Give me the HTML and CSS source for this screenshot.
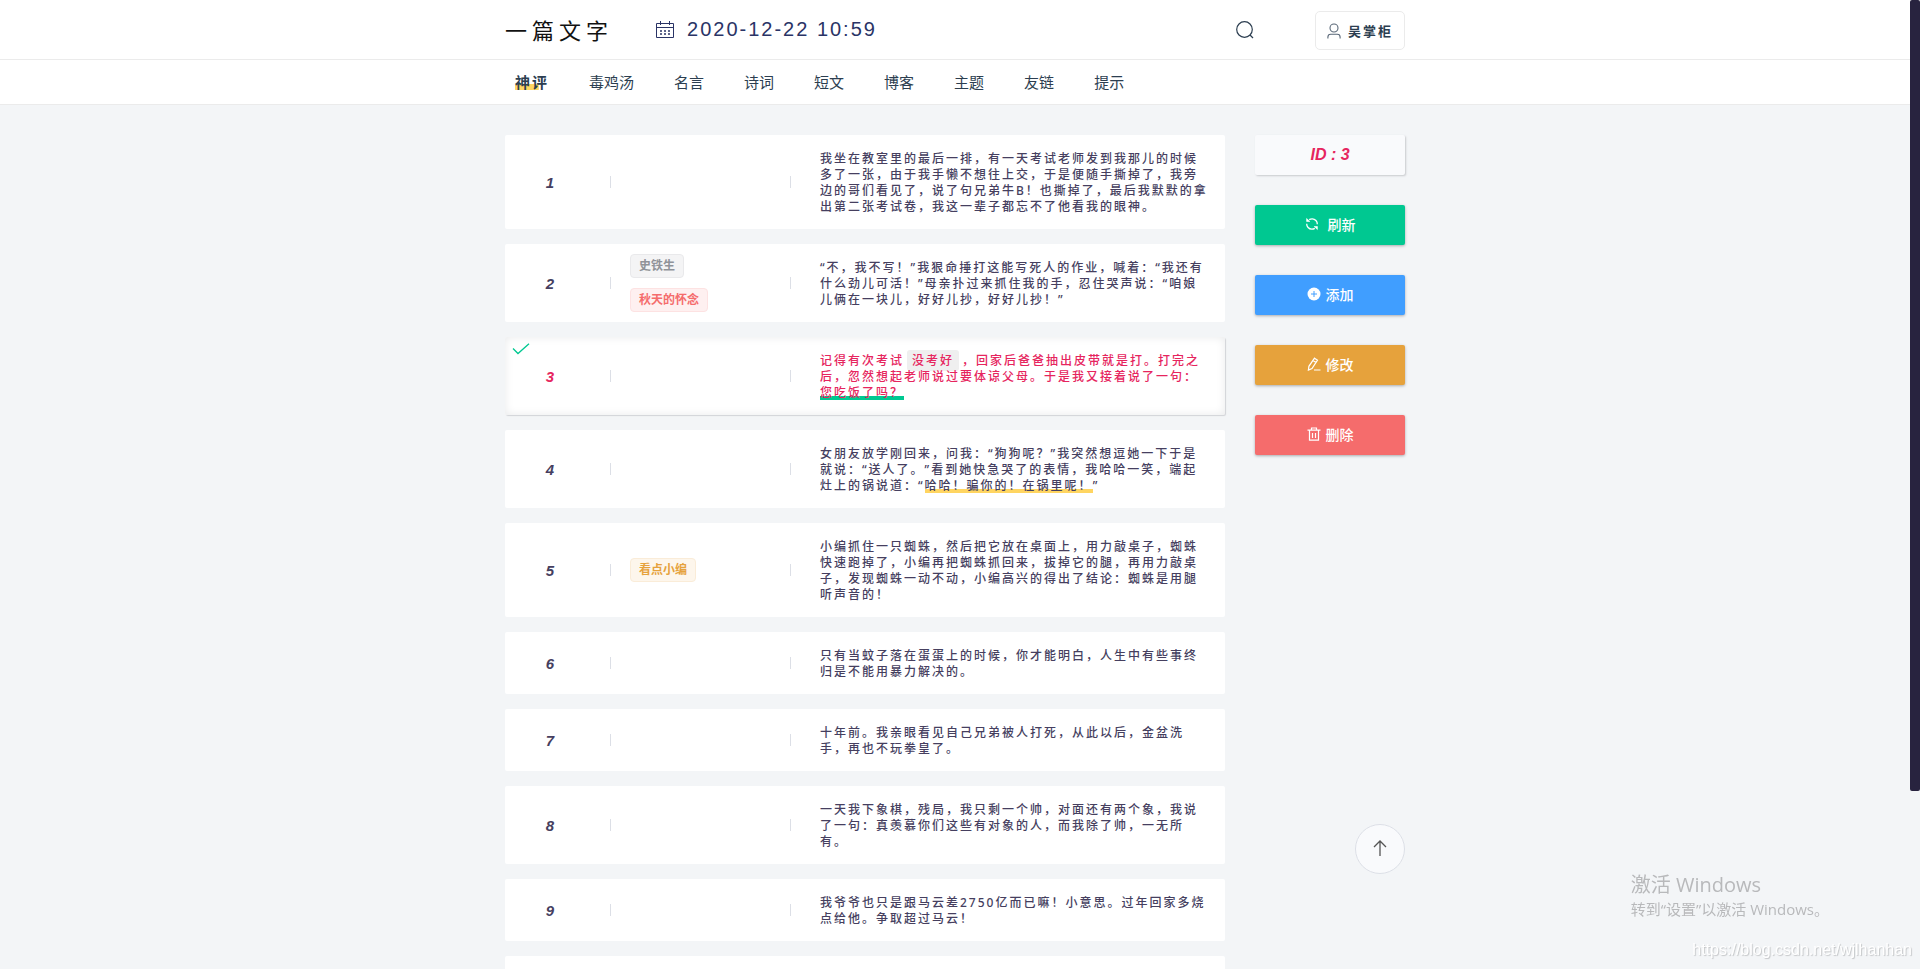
FILE: index.html
```html
<!DOCTYPE html>
<html lang="zh-CN">
<head>
<meta charset="utf-8">
<title>一篇文字</title>
<link rel="stylesheet" href="styles.css">
</head>
<body>
<header class="topbar">
  <div class="wrap topbar-row">
    <a class="logo" href="#">一篇文字</a>
    <div class="clock">
      <svg class="icon-cal" viewBox="0 0 18 18" fill="none" stroke="currentColor"><path d="M.5 2.500h17v14H.5zM.5 6.500h17M4.500 0v4M13.500 0v4"/><path stroke-dasharray="2 2" stroke-width="1.500" d="M4 10h10M4 13h10"/></svg>
      <time>2020-12-22 10:59</time>
    </div>
    <button class="search" type="button" aria-label="搜索">
      <svg viewBox="0 0 18 18" fill="none" stroke="currentColor" stroke-width="1.200"><circle cx="8.500" cy="8.500" r="7.800"/><path d="M14 14l3 3"/></svg>
    </button>
    <button class="user" type="button">
      <svg viewBox="0 0 14 16" fill="none" stroke="currentColor" stroke-width="1.100"><circle cx="7" cy="5" r="4"/><path d="M.9 15.500v-1.500q0-2.800 2.800-2.800h6.600q2.800 0 2.800 2.800v1.500"/></svg>
      <span>吴掌柜</span>
    </button>
  </div>
</header>
<nav class="menu">
  <div class="wrap menu-row">
    <a class="active" href="#">神评</a>
    <a href="#">毒鸡汤</a>
    <a href="#">名言</a>
    <a href="#">诗词</a>
    <a href="#">短文</a>
    <a href="#">博客</a>
    <a href="#">主题</a>
    <a href="#">友链</a>
    <a href="#">提示</a>
  </div>
</nav>
<main class="page">
  <div class="wrap content">
  <section class="list">
    <article class="card"><b class="num">1</b><i class="bar"></i><div class="tags"></div><i class="bar"></i><p>我坐在教室里的最后一排，有一天考试老师发到我那儿的时候多了一张，由于我手懒不想往上交，于是便随手撕掉了，我旁边的哥们看见了，说了句兄弟牛B！也撕掉了，最后我默默的拿出第二张考试卷，我这一辈子都忘不了他看我的眼神。</p></article>
    <article class="card"><b class="num">2</b><i class="bar"></i><div class="tags"><span class="tag gray">史铁生</span><span class="tag red">秋天的怀念</span></div><i class="bar"></i><p>“不，我不写！”我狠命捶打这能写死人的作业，喊着：“我还有什么劲儿可活！”母亲扑过来抓住我的手，忍住哭声说：“咱娘儿俩在一块儿，好好儿抄，好好儿抄！”</p></article>
    <article class="card selected"><svg class="check" viewBox="0 0 18 12" fill="none" stroke="currentColor" stroke-width="1.300"><path d="M1 5.500l5 5L17 .7"/></svg><b class="num">3</b><i class="bar"></i><div class="tags"></div><i class="bar"></i><p>记得有次考试<span class="chip">没考好</span>，回家后爸爸抽出皮带就是打。打完之后，忽然想起老师说过要体谅父母。于是我又接着说了一句：<span class="mark green">您吃饭了吗？</span></p></article>
    <article class="card"><b class="num">4</b><i class="bar"></i><div class="tags"></div><i class="bar"></i><p>女朋友放学刚回来，问我：“狗狗呢？”我突然想逗她一下于是就说：“送人了。”看到她快急哭了的表情，我哈哈一笑，端起灶上的锅说道：“<span class="mark yellow">哈哈！骗你的！在锅里呢！</span>”</p></article>
    <article class="card"><b class="num">5</b><i class="bar"></i><div class="tags"><span class="tag orange">看点小编</span></div><i class="bar"></i><p>小编抓住一只蜘蛛，然后把它放在桌面上，用力敲桌子，蜘蛛快速跑掉了，小编再把蜘蛛抓回来，拔掉它的腿，再用力敲桌子，发现蜘蛛一动不动，小编高兴的得出了结论：蜘蛛是用腿听声音的！</p></article>
    <article class="card"><b class="num">6</b><i class="bar"></i><div class="tags"></div><i class="bar"></i><p>只有当蚊子落在蛋蛋上的时候，你才能明白，人生中有些事终归是不能用暴力解决的。</p></article>
    <article class="card"><b class="num">7</b><i class="bar"></i><div class="tags"></div><i class="bar"></i><p>十年前。我亲眼看见自己兄弟被人打死，从此以后，金盆洗手，再也不玩拳皇了。</p></article>
    <article class="card"><b class="num">8</b><i class="bar"></i><div class="tags"></div><i class="bar"></i><p>一天我下象棋，残局，我只剩一个帅，对面还有两个象，我说了一句：真羡慕你们这些有对象的人，而我除了帅，一无所有。</p></article>
    <article class="card"><b class="num">9</b><i class="bar"></i><div class="tags"></div><i class="bar"></i><p>我爷爷也只是跟马云差2750亿而已嘛！小意思。过年回家多烧点给他。争取超过马云！</p></article>
    <article class="card"></article>
  </section>
  <aside class="side">
    <div class="current">ID : 3</div>
    <button class="act refresh" type="button"><svg viewBox="0 0 14 14" fill="none" stroke="currentColor" stroke-width="1.300"><path d="M4.200 2.600Q5.500 1.800 7.200 1.800A5.200 5.200 0 0 1 12.300 7.300M9.800 11.400Q8.500 12.200 6.800 12.200A5.200 5.200 0 0 1 1.700 6.700"/><path d="M1.600 1.500v3h3.200zM12.400 12.500v-3H9.200z" fill="currentColor" stroke-width=".6"/></svg>刷新</button>
    <button class="act add" type="button"><svg viewBox="0 0 14 14"><circle cx="7" cy="7" r="6.500" fill="currentColor"/><path d="M7 4v6M4 7h6" stroke="#409eff"/></svg>添加</button>
    <button class="act edit" type="button"><svg viewBox="0 0 14 14" fill="none" stroke="currentColor" stroke-width="1.200"><path d="M7.500 1.200l3 2-5.500 8.300-3.600 1.600.5-3.800zM6 3.500l3 2M7 13h6.500"/></svg>修改</button>
    <button class="act del" type="button"><svg viewBox="0 0 14 14" fill="none" stroke="currentColor" stroke-width="1.200"><path d="M.5 3.200h13M4.500 3V1h5v2M2.500 3.500v9.700h9V3.500M5.500 6v5M8.500 6v5"/></svg>删除</button>
  </aside>
  </div>
</main>
<button class="to-top" type="button" aria-label="返回顶部"><svg viewBox="0 0 14 16" fill="none" stroke="currentColor" stroke-width="1.300"><path d="M7 16V1M1 7l6-6 6 6"/></svg></button>
<div class="activate"><div class="activate-title">激活 Windows</div><div>转到“设置”以激活 Windows。</div></div>
<div class="credit">https://blog.csdn.net/wjlhanhan</div>
<div class="scroll-thumb"></div>
</body>
</html>
```
FILE: styles.css
```css
* { box-sizing: border-box; }
html { height: 100%; overflow: hidden; }
body {
  display: flex;
  flex-direction: column;
  margin: 0;
  height: 100%;
  overflow: hidden;
  background: #f3f5f7;
  color: #2c3e50;
  font-family: "Liberation Sans", "Noto Sans CJK SC", sans-serif;
}
a { color: inherit; text-decoration: none; }
button { font: inherit; color: inherit; cursor: pointer; }
svg { display: block; flex: none; }
.topbar, .menu, .page { flex: none; padding-right: 10px; }
.wrap { width: 100%; max-width: 900px; margin: 0 auto; }

.topbar { background: #fff; border-bottom: 1px solid #ebebeb; }
.topbar-row { display: flex; align-items: center; height: 59px; }
.logo {
  font-family: "Noto Sans CJK SC", sans-serif;
  font-size: 22px;
  line-height: 32px;
  padding-bottom: 2px;
  letter-spacing: 5px;
  color: #111;
}
.clock {
  display: flex;
  align-items: center;
  gap: 13px;
  margin-left: 43px;
  font-size: 20px;
  letter-spacing: 2px;
  color: #2a3466;
}
.icon-cal { width: 18px; height: 18px; }
.search {
  margin-left: auto;
  margin-right: 61px;
  padding: 0;
  border: 0;
  background: none;
}
.search svg { width: 18px; height: 18px; }
.user {
  display: flex;
  align-items: center;
  justify-content: center;
  gap: 7px;
  width: 90px;
  height: 39px;
  margin-top: 2px;
  padding: 0;
  border: 1px solid #ebebeb;
  border-radius: 5px;
  background: #fff;
  font-size: 13px;
  font-weight: 700;
  letter-spacing: 2px;
}
.user svg { width: 14px; height: 16px; color: #5a6878; }

.menu { background: #fff; border-bottom: 1px solid #ebebeb; }
.menu-row {
  display: flex;
  align-items: center;
  gap: 40px;
  height: 44px;
  padding: 2px 0 0 10px;
  font-size: 15px;
  line-height: 20px;
}
.menu .active {
  font-weight: 700;
  letter-spacing: 2px;
  background: linear-gradient(#ffd561, #ffd561) 0 11px / 70% 6px no-repeat;
}

.page { flex: 1; min-height: 0; overflow: hidden; padding-top: 30px; }
.content { display: flex; align-items: flex-start; gap: 30px; }
.list { flex: 1; display: flex; flex-direction: column; gap: 15px; }
.card {
  position: relative;
  display: grid;
  grid-template-columns: 3fr 1fr 5fr 1fr 14fr;
  align-items: center;
  min-height: 62px;
  background: #fff;
  border-radius: 2px;
  color: #463f5f;
}
.card p {
  margin: 0;
  padding: 16px 15px 14px;
  font-family: "Noto Sans", "Noto Sans CJK SC", sans-serif;
  font-size: 12px;
  line-height: 16px;
  font-weight: 500;
  letter-spacing: 2px;
  text-spacing-trim: space-all;
}
.num { text-align: center; font-size: 15px; font-style: italic; }
.bar { justify-self: center; width: 1px; height: 12px; background: #dcdfe6; }
.tags {
  display: flex;
  flex-direction: column;
  align-items: flex-start;
  gap: 10px;
  padding: 10px 5px;
}
.tag {
  padding: 0 8px;
  border: 1px solid;
  border-radius: 4px;
  font-size: 12px;
  line-height: 22px;
  font-weight: 700;
}
.gray { color: #909399; background: #f4f4f5; border-color: #e9e9eb; }
.red { color: #f56c6c; background: #fef0f0; border-color: #fde2e2; }
.orange { color: #e6a23c; background: #fdf6ec; border-color: #faecd8; }
.selected {
  color: #e6255e;
  box-shadow: 1px 1px 1px #d2d4d8, inset 0 0 10px #e9eaeb;
}
.check { position: absolute; left: 7px; top: 6px; width: 18px; height: 12px; color: #00c891; }
.chip { margin: 0 3px; padding: 2px 5px; border-radius: 3px; background: #efefef; }
.mark { background-repeat: no-repeat; background-position: 0 calc(100% - 1px); background-size: 100% 4px; }
.green { background-image: linear-gradient(#00c891, #00c891); }
.yellow { background-image: linear-gradient(#ffd561, #ffd561); }

.side { width: 150px; display: flex; flex-direction: column; gap: 30px; }
.current {
  height: 40px;
  border-radius: 2px;
  background: #f9fafc;
  box-shadow: 1px 1px 2px #c8cacd;
  color: #e6255e;
  font-size: 16px;
  font-weight: 700;
  font-style: italic;
  line-height: 40px;
  text-align: center;
}
.act {
  display: flex;
  align-items: center;
  justify-content: center;
  gap: 5px;
  height: 40px;
  padding: 0 0 2px;
  border: 0;
  border-radius: 2px;
  box-shadow: 0 1px 3px #a9abae;
  color: #fff;
  font-size: 14px;
  font-weight: 500;
}
.act svg { width: 14px; height: 14px; }
.refresh { gap: 9px; background: #00c891; }
.add { background: #409eff; }
.edit { background: #e6a23c; }
.del { background: #f56c6c; }

.to-top {
  position: fixed;
  left: calc(50% + 395px);
  bottom: 95px;
  display: grid;
  place-items: center;
  width: 50px;
  height: 50px;
  padding: 0 0 3px;
  border: 1px solid #dcdfe6;
  border-radius: 50%;
  background: #f9fafc;
  color: #555;
}
.to-top svg { width: 14px; height: 16px; }
.activate {
  position: fixed;
  right: 91px;
  bottom: 50px;
  color: #b8b9bb;
  font: 15px/20px "Open Sans", "Noto Sans CJK SC", sans-serif;
}
.activate-title { font-size: 20px; line-height: 28px; }
.credit {
  position: fixed;
  right: 8px;
  bottom: 9px;
  color: #fff;
  font-size: 16px;
  line-height: 20px;
  text-shadow: 1px 1px 1px #c4c6c8;
}
.scroll-thumb {
  position: fixed;
  right: 0;
  top: 0;
  width: 10px;
  height: 791px;
  border-radius: 2px;
  background: #28233f;
}
```
